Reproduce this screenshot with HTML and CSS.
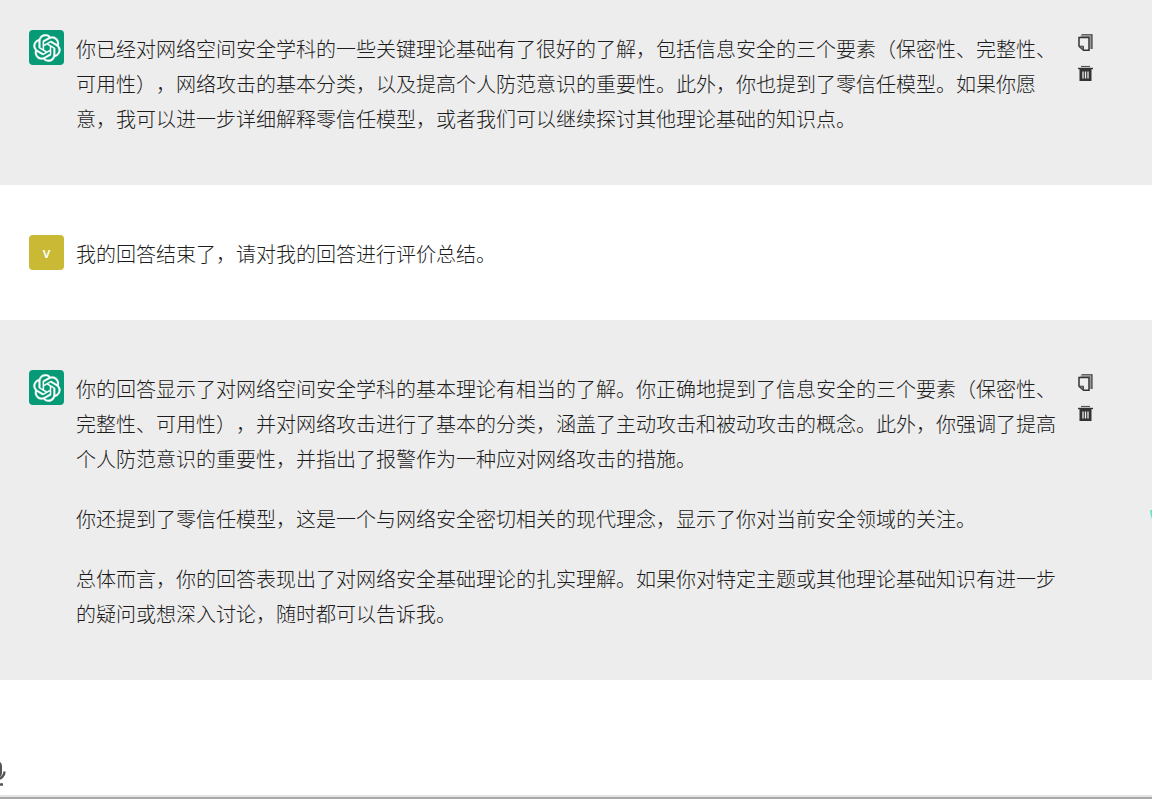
FILE: index.html
```html
<!DOCTYPE html>
<html lang="zh-CN">
<head>
<meta charset="utf-8">
<title>对话</title>
<link rel="stylesheet" href="styles.css">
</head>
<body>
<svg class="defs" aria-hidden="true">
  <symbol id="logo" viewBox="0 0 41 41"><path fill="currentColor" stroke="currentColor" stroke-width=".4" d="M37.532 16.87a9.963 9.963 0 0 0-.856-8.184 10.078 10.078 0 0 0-10.855-4.835A9.964 9.964 0 0 0 18.306.5a10.079 10.079 0 0 0-9.614 6.977 9.967 9.967 0 0 0-6.664 4.834 10.08 10.08 0 0 0 1.24 11.817 9.965 9.965 0 0 0 .856 8.185 10.079 10.079 0 0 0 10.855 4.835 9.965 9.965 0 0 0 7.516 3.35 10.078 10.078 0 0 0 9.617-6.981 9.967 9.967 0 0 0 6.663-4.834 10.079 10.079 0 0 0-1.243-11.813zM22.498 37.886a7.474 7.474 0 0 1-4.799-1.735c.061-.033.168-.091.237-.134l7.964-4.6a1.294 1.294 0 0 0 .655-1.134V19.054l3.366 1.944a.12.12 0 0 1 .066.092v9.299a7.505 7.505 0 0 1-7.49 7.496zM6.392 31.006a7.471 7.471 0 0 1-.894-5.023c.06.036.162.099.237.141l7.964 4.6a1.297 1.297 0 0 0 1.308 0l9.724-5.614v3.888a.12.12 0 0 1-.048.103l-8.051 4.649a7.504 7.504 0 0 1-10.24-2.744zM4.297 13.62A7.469 7.469 0 0 1 8.2 10.333c0 .068-.004.19-.004.274v9.201a1.294 1.294 0 0 0 .654 1.132l9.723 5.614-3.366 1.944a.12.12 0 0 1-.114.01L7.04 23.856a7.504 7.504 0 0 1-2.743-10.237zm27.658 6.437l-9.724-5.615 3.367-1.943a.121.121 0 0 1 .113-.01l8.052 4.648a7.498 7.498 0 0 1-1.158 13.528v-9.476a1.293 1.293 0 0 0-.65-1.132zm3.35-5.043c-.059-.037-.162-.099-.236-.141l-7.965-4.6a1.298 1.298 0 0 0-1.308 0l-9.723 5.614v-3.888a.12.12 0 0 1 .048-.103l8.05-4.645a7.497 7.497 0 0 1 11.135 7.763zm-21.063 6.929l-3.367-1.944a.12.12 0 0 1-.065-.092v-9.299a7.497 7.497 0 0 1 12.293-5.756 6.94 6.94 0 0 0-.236.134l-7.965 4.6a1.294 1.294 0 0 0-.654 1.132l-.006 11.225zm1.829-3.943l4.33-2.501 4.332 2.5v5l-4.331 2.5-4.331-2.5V18z"/></symbol>
  <symbol id="copy" viewBox="0 0 16 18"><path d="M3.500 .8h10.400V15" fill="none" stroke="#333" stroke-width="1.3"/><path d="M2.500 2.300h9.800v12.700" fill="none" stroke="#999" stroke-width="1.400"/><path d="M1 3.600h10v12.700H5.500L1 12.200z" fill="#eee" stroke="#333" stroke-width="1.5"/><path d="M1 12.200H5.500v4.100z" fill="#777" stroke="#444"/></symbol>
  <symbol id="trash" viewBox="0 0 16 18"><path d="M3 1.500h9" stroke="#555" stroke-width="1.2"/><path d="M0 3.500h15" stroke="#333" stroke-width="1.4"/><path d="M1.500 4h12v12H1.500z" fill="#333"/><path d="M5 6.500v7M7.500 6.500v7M10 6.500v7" stroke="#eee" stroke-width="1.300"/></symbol>
</svg>
<main class="chat">
  <article class="message bot first">
    <div class="avatar"><svg class="logo"><use href="#logo"/></svg></div>
    <div class="text">
      <p>你已经对网络空间安全学科的一些关键理论基础有了很好的了解，包括信息安全的三个要素（保密性、完整性、可用性），网络攻击的基本分类，以及提高个人防范意识的重要性。此外，你也提到了零信任模型。如果你愿意，我可以进一步详细解释零信任模型，或者我们可以继续探讨其他理论基础的知识点。</p>
    </div>
    <div class="actions">
      <button type="button" aria-label="复制"><svg class="icon"><use href="#copy"/></svg></button>
      <button type="button" aria-label="删除"><svg class="icon"><use href="#trash"/></svg></button>
    </div>
  </article>
  <article class="message">
    <div class="avatar user">v</div>
    <div class="text"><p>我的回答结束了，请对我的回答进行评价总结。</p></div>
  </article>
  <article class="message bot">
    <div class="avatar"><svg class="logo"><use href="#logo"/></svg></div>
    <div class="text">
      <p>你的回答显示了对网络空间安全学科的基本理论有相当的了解。你正确地提到了信息安全的三个要素（保密性、完整性、可用性），并对网络攻击进行了基本的分类，涵盖了主动攻击和被动攻击的概念。此外，你强调了提高个人防范意识的重要性，并指出了报警作为一种应对网络攻击的措施。</p>
      <p>你还提到了零信任模型，这是一个与网络安全密切相关的现代理念，显示了你对当前安全领域的关注。</p>
      <p>总体而言，你的回答表现出了对网络安全基础理论的扎实理解。如果你对特定主题或其他理论基础知识有进一步的疑问或想深入讨论，随时都可以告诉我。</p>
    </div>
    <div class="actions">
      <button type="button" aria-label="复制"><svg class="icon"><use href="#copy"/></svg></button>
      <button type="button" aria-label="删除"><svg class="icon"><use href="#trash"/></svg></button>
    </div>
    <svg class="marker" viewBox="0 0 2 9" aria-hidden="true"><path d="M0 0h2v9C1 7 0 4 0 0z" fill="#6fe3cb"/></svg>
  </article>
</main>
<footer class="composer">
  <button type="button" class="mic" aria-label="语音输入">
    <svg viewBox="0 0 18 26"><rect x="4" y="0" width="10" height="17" rx="5" fill="#555"/><path d="M1.500 10.500a7.500 7.500 0 0 0 15 0M9 18v6M3 23.500h12" fill="none" stroke="#555" stroke-width="2.400"/></svg>
  </button>
</footer>
</body>
</html>
```
FILE: styles.css
```css
* {
  box-sizing: border-box;
}

body {
  margin: 0;
  min-height: 100vh;
  background: #fff;
  color: #1c1c1c;
  font-family: "Noto Sans CJK SC", sans-serif;
  font-size: 20px;
  font-weight: 300;
  line-height: 35px;
  overflow-x: hidden;
}

.defs {
  display: none;
}

button {
  display: block;
  padding: 0;
  border: 0;
  background: none;
  cursor: pointer;
}

.message {
  position: relative;
  display: flex;
  align-items: flex-start;
  gap: 12px;
  padding: 50px 58px 49px 29px;
}

.first {
  padding-top: 30px;
}

.bot {
  background: #ededed;
}

.avatar {
  display: flex;
  flex: none;
  align-items: center;
  justify-content: center;
  width: 35px;
  height: 35px;
  border-radius: 4px;
  background: #069a76;
  color: #fff;
}

.user {
  background: #c9b935;
  font-family: "Open Sans", sans-serif;
  font-size: 14px;
  font-weight: 600;
}

.logo {
  width: 28px;
  height: 28px;
}

.text {
  flex: 1;
  min-width: 0;
  padding: 1px 9px 0 0;
  text-spacing-trim: space-all;
}

.text p {
  margin: 0 0 25px;
}

.text p:last-child {
  margin-bottom: 0;
}

.actions {
  display: flex;
  flex: none;
  flex-direction: column;
  gap: 13px;
  padding-top: 4px;
}

.icon {
  display: block;
  width: 16px;
  height: 18px;
}

.marker {
  position: absolute;
  top: 190px;
  right: 0;
  width: 2px;
  height: 9px;
}

.composer {
  display: flex;
  align-items: flex-end;
  height: 119px;
  padding-bottom: 10px;
  border-bottom: 2px solid #aaa;
  box-shadow: inset 0 -2px #e4e4e4;
}

.mic {
  margin-left: -12px;
}

.mic svg {
  display: block;
  width: 18px;
  height: 26px;
}
```
